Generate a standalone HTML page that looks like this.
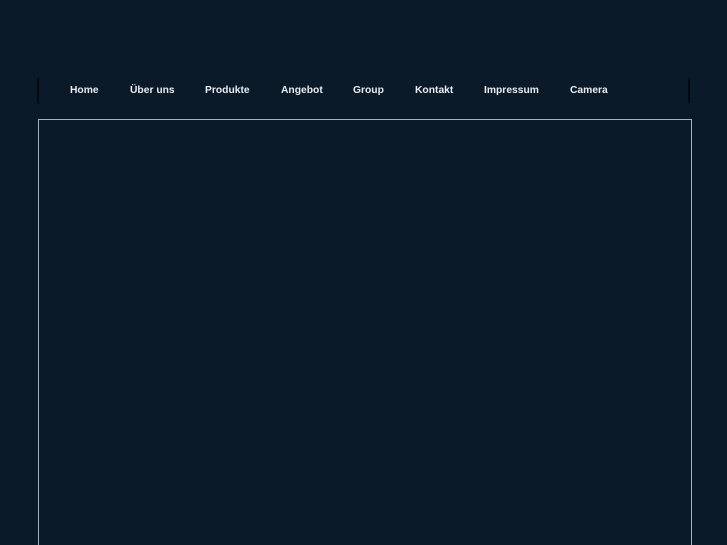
<!DOCTYPE html>
<html><head><style>
html,body{margin:0;padding:0;width:727px;height:545px;background:#0b1a29;overflow:hidden;font-family:"Liberation Sans",Arial,sans-serif}
.w{position:relative;width:727px;height:545px;overflow:hidden}
.l{position:absolute;top:78px;width:2px;height:25px;background:#02080e}
.n{position:absolute;top:84px;color:#e8ecef;font-size:10.3px;font-weight:bold;white-space:nowrap;line-height:13px}
.box{position:absolute;left:38px;top:119px;width:652px;height:425px;border:1px solid #a9b1b8;border-bottom:none}
</style></head><body><div class="w">
<div class="l" style="left:37px"></div>
<div class="l" style="left:688px"></div>
<div class="n" style="left:70px">Home</div>
<div class="n" style="left:130px">Über uns</div>
<div class="n" style="left:205px">Produkte</div>
<div class="n" style="left:281px">Angebot</div>
<div class="n" style="left:353px">Group</div>
<div class="n" style="left:415px">Kontakt</div>
<div class="n" style="left:484px">Impressum</div>
<div class="n" style="left:570px">Camera</div>
<div class="box"></div>
</div></body></html>
